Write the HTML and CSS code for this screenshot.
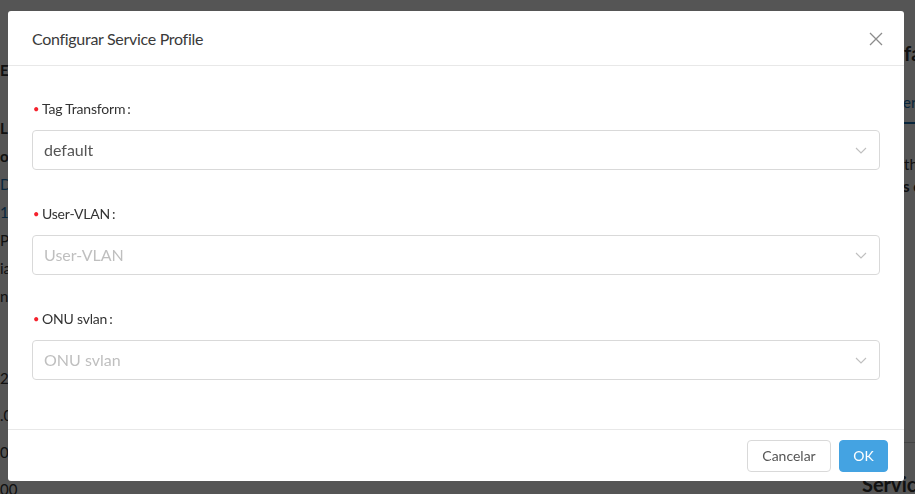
FILE: index.html
```html
<!DOCTYPE html>
<html lang="es">
<head>
<meta charset="utf-8">
<title>Configurar Service Profile</title>
<link rel="stylesheet" href="styles.css">
</head>
<body>
<div class="bg">
  <div class="bg-left">
    <div class="bl bl-bold bl-first">E)</div>
    <div class="bl bl-bold bl-gap">Li</div>
    <div class="bl bl-bold">oc</div>
    <div class="bl bl-link">D</div>
    <div class="bl bl-link">1:</div>
    <div class="bl">P</div>
    <div class="bl">ia</div>
    <div class="bl">n</div>
    <div class="bl bl-num bl-gap2">2.0</div>
    <div class="bl bl-num">.0</div>
    <div class="bl bl-num">0.0</div>
    <div class="bl bl-num">00</div>
  </div>
  <div class="bg-mid"></div>
  <div class="bg-right">
    <div class="br-title">fa</div>
    <div class="br-tab">ern</div>
    <div class="br-text">th</div>
    <div class="br-bold">s c</div>
    <div class="br-line"></div>
    <div class="br-service">Servic</div>
  </div>
</div>

<div class="overlay">
  <div class="modal">
    <div class="modal-header">
      <div class="modal-title">Configurar Service Profile</div>
      <svg class="close" width="14" height="14" viewBox="0 0 14 14"><path d="M1 1L13 13M13 1L1 13" stroke="#8c8c8c" stroke-width="1.3" fill="none"/></svg>
    </div>
    <div class="modal-body">
      <div class="form-item">
        <div class="label"><span class="req">•</span>Tag Transform<span class="colon">:</span></div>
        <div class="select">
          <span class="value">default</span>
          <svg class="arrow" width="12" height="7" viewBox="0 0 12 7"><path d="M1 1L6 6L11 1" stroke="#bfbfbf" stroke-width="1.1" fill="none"/></svg>
        </div>
      </div>
      <div class="form-item">
        <div class="label"><span class="req">•</span>User-VLAN<span class="colon">:</span></div>
        <div class="select">
          <span class="placeholder">User-VLAN</span>
          <svg class="arrow" width="12" height="7" viewBox="0 0 12 7"><path d="M1 1L6 6L11 1" stroke="#bfbfbf" stroke-width="1.1" fill="none"/></svg>
        </div>
      </div>
      <div class="form-item">
        <div class="label"><span class="req">•</span>ONU svlan<span class="colon">:</span></div>
        <div class="select">
          <span class="placeholder">ONU svlan</span>
          <svg class="arrow" width="12" height="7" viewBox="0 0 12 7"><path d="M1 1L6 6L11 1" stroke="#bfbfbf" stroke-width="1.1" fill="none"/></svg>
        </div>
      </div>
    </div>
    <div class="modal-footer">
      <button class="btn btn-default">Cancelar</button>
      <button class="btn btn-primary">OK</button>
    </div>
  </div>
</div>
</body>
</html>
```

FILE: styles.css
```css
* { box-sizing: border-box; }
html, body { margin: 0; padding: 0; }
body {
  width: 915px;
  height: 494px;
  overflow: hidden;
  font-family: Lato, "Open Sans", "Noto Sans", sans-serif;
  font-size: 14px;
  color: #333;
  background: #fff;
}

/* background page */
.bg {
  display: grid;
  grid-template-columns: 60px 1fr 60px;
  height: 494px;
  overflow: hidden;
}
.bg-left { padding-top: 56px; white-space: nowrap; overflow: hidden; }
.bl { line-height: 28px; font-size: 15px; color: #333; }
.bl-bold { font-weight: 700; }
.bl-gap { margin-top: 30px; }
.bl-link { color: #1a73b5; }
.bl-num { line-height: 37px; }
.bl-gap2 { margin-top: 50px; }
.bg-mid { border-bottom: 1px solid #222; margin-left: -33px; }
.bg-right {
  display: flex;
  flex-direction: column;
  white-space: nowrap;
  padding-left: 0;
}
.br-title { margin-top: 40px; padding-left: 49px; font-size: 20px; font-weight: 700; line-height: 26px; }
.br-tab {
  margin-top: 26px; padding-left: 48px; color: #1a73b5; font-size: 15px; line-height: 20px;
  padding-bottom: 10px; border-bottom: 2px solid #1a73b5;
}
.br-text { margin-top: 29px; padding-left: 49px; font-size: 15px; line-height: 22px; }
.br-bold { padding-left: 48px; font-size: 15px; font-weight: 700; line-height: 22px; }
.br-line { margin-top: 245px; border-top: 1px solid #ccc; }
.br-service { margin-top: 28px; padding-left: 7px; font-size: 20px; font-weight: 700; line-height: 26px; }

/* overlay + modal */
.overlay {
  position: fixed;
  inset: 0;
  background: rgba(0, 0, 0, 0.667);
  padding: 11px 0 0 8px;
}
.modal {
  width: 896px;
  height: 470px;
  background: #fff;
  border-radius: 3px;
  display: flex;
  flex-direction: column;
}
.modal-header {
  height: 55px;
  flex: none;
  display: flex;
  align-items: center;
  justify-content: space-between;
  padding: 0 21px 0 24px;
  border-bottom: 1px solid #e8e8e8;
}
.modal-title { font-size: 16px; color: #3a3a3a; letter-spacing: -0.3px; padding-top: 1px; }
.close { display: block; margin-top: 1px; }
.modal-body {
  flex: 1;
  padding: 32px 24px 0 24px;
}
.form-item { margin-bottom: 33px; }
.label {
  height: 22px;
  line-height: 22px;
  font-size: 14px;
  color: #333;
  margin-bottom: 10px;
  display: flex;
  align-items: center;
  letter-spacing: -0.2px;
}
.req { color: #f5222d; font-size: 11px; width: 9px; margin-left: 1px; }
.colon { margin-left: 2px; }
.select {
  height: 40px;
  border: 1px solid #d9d9d9;
  border-radius: 4px;
  display: flex;
  align-items: center;
  justify-content: space-between;
  padding: 0 12px 2px 11px;
  font-size: 16px;
}
.value { color: #555; }
.placeholder { color: #bfbfbf; }
.arrow { display: block; margin-top: 2px; }
.modal-footer {
  height: 52px;
  flex: none;
  border-top: 1px solid #e8e8e8;
  display: flex;
  justify-content: flex-end;
  align-items: flex-start;
  gap: 8px;
  padding: 10px 16px 0 0;
}
.btn {
  height: 32px;
  border-radius: 4px;
  font-family: inherit;
  font-size: 14px;
  padding: 0 0 1px;
  cursor: pointer;
}
.btn-default { width: 84px; background: #fff; border: 1px solid #d9d9d9; color: #555; }
.btn-primary { width: 49px; background: #44a3e2; border: 1px solid #44a3e2; color: #fff; }
```
